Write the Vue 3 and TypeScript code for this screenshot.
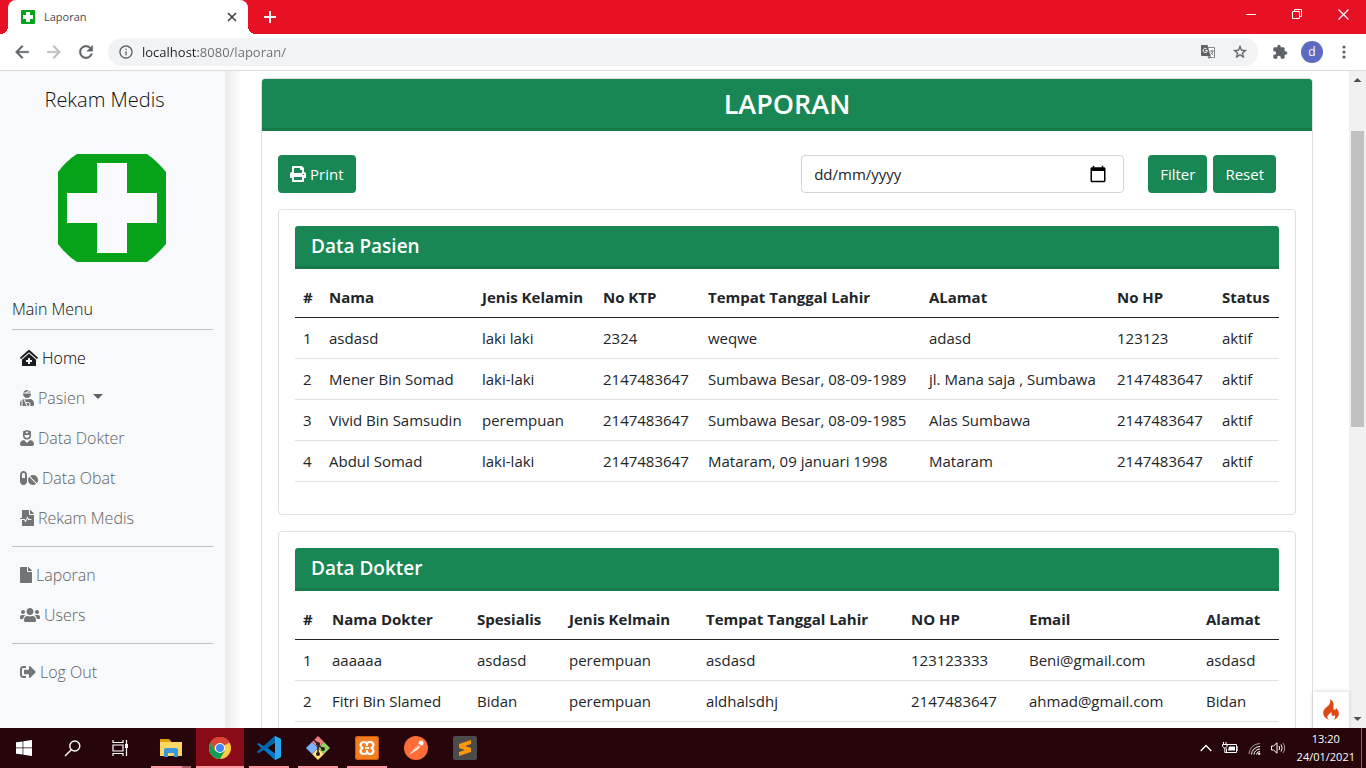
<script setup lang="ts">
import { ref } from 'vue'

interface MenuItem {
  label: string
  width: number
  path: string
  active?: boolean
  dropdown?: boolean
}

interface DataSection {
  title: string
  heads: string[]
  cols: number[]
  rows: string[][]
}

const url = ref('localhost:8080/laporan/')
const date = ref('')

const menuGroups: MenuItem[][] = [
  [
    {
      label: 'Home',
      width: 576,
      active: true,
      path: 'M288 115L69.47 307.71c-1.62 1.46-3.69 2.14-5.47 3.35V496a16 16 0 0 0 16 16h416a16 16 0 0 0 16-16V311.1c-1.7-1.16-3.72-1.82-5.26-3.2zm96 261a8 8 0 0 1-8 8h-56v56a8 8 0 0 1-8 8h-48a8 8 0 0 1-8-8v-56h-56a8 8 0 0 1-8-8v-48a8 8 0 0 1 8-8h56v-56a8 8 0 0 1 8-8h48a8 8 0 0 1 8 8v56h56a8 8 0 0 1 8 8zm186.69-139.72l-255.94-226a39.85 39.85 0 0 0-53.45 0l-256 226a16 16 0 0 0-1.21 22.6L25.5 282.7a16 16 0 0 0 22.6 1.21L277.42 81.63a16 16 0 0 1 21.17 0L527.91 283.9a16 16 0 0 0 22.6-1.21l21.4-23.82a16 16 0 0 0-1.22-22.59z',
    },
    {
      label: 'Pasien',
      width: 448,
      dropdown: true,
      path: 'M277.37 11.98C261.08 4.47 243.11 0 224 0c-53.69 0-99.5 33.13-118.51 80h81.19l90.69-68.02zM342.51 80c-7.9-19.47-20.67-36.2-36.49-49.52L239.99 80h102.52zM224 256c70.69 0 128-57.31 128-128 0-5.48-.95-10.7-1.61-16H97.61c-.67 5.3-1.61 10.52-1.61 16 0 70.69 57.31 128 128 128zM80 299.7V512h128.26l-98.45-221.52A132.835 132.835 0 0 0 80 299.7zM0 464c0 26.51 21.49 48 48 48V320.24C18.88 344.89 0 381.26 0 422.4V464zm256-48h-55.38l42.67 96H256c26.47 0 48-21.53 48-48s-21.53-48-48-48zm57.6-128h-16.71c-22.24 10.18-46.88 16-72.89 16s-50.65-5.82-72.89-16h-7.37l42.67 96H256c44.11 0 80 35.89 80 80 0 18.08-6.26 34.59-16.41 48H400c26.51 0 48-21.49 48-48v-41.6c0-74.23-60.17-134.4-134.4-134.4z',
    },
    {
      label: 'Data Dokter',
      width: 448,
      path: 'M319.41,320,224,415.39,128.59,320C57.1,323.1,0,381.6,0,453.79A58.21,58.21,0,0,0,58.21,512H389.79A58.21,58.21,0,0,0,448,453.79C448,381.6,390.9,323.1,319.41,320ZM224,304A128,128,0,0,0,352,176V65.82a32,32,0,0,0-20.76-30L246.47,4.07a64,64,0,0,0-44.94,0L116.76,35.86A32,32,0,0,0,96,65.82V176A128,128,0,0,0,224,304ZM184,71.67a5,5,0,0,1,5-5h21.67V45a5,5,0,0,1,5-5h16.66a5,5,0,0,1,5,5V66.67H259a5,5,0,0,1,5,5V88.33a5,5,0,0,1-5,5H237.33V115a5,5,0,0,1-5,5H215.67a5,5,0,0,1-5-5V93.33H189a5,5,0,0,1-5-5ZM144,160H304v16a80,80,0,0,1-160,0Z',
    },
    {
      label: 'Data Obat',
      width: 576,
      path: 'M112 32C50.1 32 0 82.1 0 144v224c0 61.9 50.1 112 112 112s112-50.1 112-112V144c0-61.9-50.1-112-112-112zm48 224H64V144c0-26.5 21.5-48 48-48s48 21.5 48 48v112zm139.7-29.7c-3.5-3.5-9.4-3.1-12.3.8-45.3 62.5-40.4 150.1 15.9 206.4 56.3 56.3 143.9 61.2 206.4 15.9 4-2.9 4.3-8.8.8-12.3L299.7 226.3zm229.8-19c-56.3-56.3-143.9-61.2-206.4-15.9-4 2.9-4.3 8.8-.8 12.3l210.8 210.8c3.5 3.5 9.4 3.1 12.3-.8 45.3-62.6 40.5-150.1-15.9-206.4z',
    },
    {
      label: 'Rekam Medis',
      width: 448,
      path: 'M288 136V0H88C74.7 0 64 10.7 64 24v232H8c-4.4 0-8 3.6-8 8v16c0 4.4 3.6 8 8 8h140.9c3 0 5.8 1.7 7.2 4.4l19.9 39.8 56.8-113.7c2.9-5.9 11.4-5.9 14.3 0l34.7 69.5H352c8.8 0 16 7.2 16 16s-7.2 16-16 16h-89.9L240 275.8l-56.8 113.7c-2.9 5.9-11.4 5.9-14.3 0L134.1 320H64v168c0 13.3 10.7 24 24 24h336c13.3 0 24-10.7 24-24V160H312c-13.2 0-24-10.8-24-24zm160-14.1v6.1H320V0h6.1c6.4 0 12.5 2.5 17 7l97.9 98c4.5 4.5 7 10.6 7 16.9z',
    },
  ],
  [
    {
      label: 'Laporan',
      width: 384,
      path: 'M224 136V0H24C10.7 0 0 10.7 0 24v464c0 13.3 10.7 24 24 24h336c13.3 0 24-10.7 24-24V160H248c-13.2 0-24-10.8-24-24zm160-14.1v6.1H256V0h6.1c6.4 0 12.5 2.5 17 7l97.9 98c4.5 4.5 7 10.6 7 16.9z',
    },
    {
      label: 'Users',
      width: 640,
      path: 'M96 224c35.3 0 64-28.7 64-64s-28.7-64-64-64-64 28.7-64 64 28.7 64 64 64zm448 0c35.3 0 64-28.7 64-64s-28.7-64-64-64-64 28.7-64 64 28.7 64 64 64zm32 32h-64c-17.6 0-33.5 7.1-45.1 18.6 40.3 22.1 68.9 62 75.1 109.4h66c17.7 0 32-14.3 32-32v-32c0-35.3-28.7-64-64-64zm-256 0c61.9 0 112-50.1 112-112S381.9 32 320 32 208 82.1 208 144s50.1 112 112 112zm76.8 32h-8.3c-20.8 10-43.9 16-68.5 16s-47.6-6-68.5-16h-8.3C179.6 288 128 339.6 128 403.2V432c0 26.5 21.5 48 48 48h288c26.5 0 48-21.5 48-48v-28.8c0-63.6-51.6-115.2-115.2-115.2zm-223.7-13.4C161.5 263.1 145.6 256 128 256H64c-35.3 0-64 28.7-64 64v32c0 17.7 14.3 32 32 32h65.9c6.3-47.4 34.9-87.3 75.2-109.4z',
    },
  ],
  [
    {
      label: 'Log Out',
      width: 512,
      path: 'M497 273L329 441c-15 15-41 4.5-41-17v-96H152c-13.3 0-24-10.7-24-24v-96c0-13.3 10.7-24 24-24h136V88c0-21.4 25.9-32 41-17l168 168c9.3 9.4 9.3 24.6 0 34zM192 436v-40c0-6.6-5.4-12-12-12H96c-17.7 0-32-14.3-32-32V160c0-17.7 14.3-32 32-32h84c6.6 0 12-5.4 12-12V76c0-6.6-5.4-12-12-12H96c-53 0-96 43-96 96v192c0 53 43 96 96 96h84c6.6 0 12-5.4 12-12z',
    },
  ],
]

const sections: DataSection[] = [
  {
    title: 'Data Pasien',
    heads: ['#', 'Nama', 'Jenis Kelamin', 'No KTP', 'Tempat Tanggal Lahir', 'ALamat', 'No HP', 'Status'],
    cols: [26, 153, 121, 105, 221, 188, 105, 65],
    rows: [
      ['1', 'asdasd', 'laki laki', '2324', 'weqwe', 'adasd', '123123', 'aktif'],
      ['2', 'Mener Bin Somad', 'laki-laki', '2147483647', 'Sumbawa Besar, 08-09-1989', 'jl. Mana saja , Sumbawa', '2147483647', 'aktif'],
      ['3', 'Vivid Bin Samsudin', 'perempuan', '2147483647', 'Sumbawa Besar, 08-09-1985', 'Alas Sumbawa', '2147483647', 'aktif'],
      ['4', 'Abdul Somad', 'laki-laki', '2147483647', 'Mataram, 09 januari 1998', 'Mataram', '2147483647', 'aktif'],
    ],
  },
  {
    title: 'Data Dokter',
    heads: ['#', 'Nama Dokter', 'Spesialis', 'Jenis Kelmain', 'Tempat Tanggal Lahir', 'NO HP', 'Email', 'Alamat'],
    cols: [29, 145, 92, 137, 205, 118, 177, 81],
    rows: [
      ['1', 'aaaaaa', 'asdasd', 'perempuan', 'asdasd', '123123333', 'Beni@gmail.com', 'asdasd'],
      ['2', 'Fitri Bin Slamed', 'Bidan', 'perempuan', 'aldhalsdhj', '2147483647', 'ahmad@gmail.com', 'Bidan'],
    ],
  },
]

const share = (cols: number[], i: number): string =>
  `${(cols[i] / cols.reduce((a, b) => a + b, 0)) * 100}%`
</script>

<template>
  <div class="screen">
    <header class="tabstrip">
      <div class="tab">
        <svg class="favicon" viewBox="0 0 16 16"><rect x="1" y="1" width="14" height="14" rx="1" fill="#04a31a" /><path d="M6 3h4v3h3v4h-3v3H6v-3H3V6h3z" fill="#fff" /></svg>
        <span class="tab-title">Laporan</span>
        <button class="bare" aria-label="Close tab">
          <svg width="10" height="10" viewBox="0 0 10 10"><path d="M1 1l8 8M9 1l-8 8" stroke="#3c4043" stroke-width="1.6" /></svg>
        </button>
      </div>
      <button class="bare new-tab" aria-label="New tab">
        <svg width="12" height="12" viewBox="0 0 12 12"><path d="M6 0v12M0 6h12" stroke="#fff" stroke-width="2" /></svg>
      </button>
      <div class="window-buttons">
        <button class="bare" aria-label="Minimize"><svg width="10" height="10" viewBox="0 0 10 10"><path d="M0 5.500h10" stroke="#fff" /></svg></button>
        <button class="bare" aria-label="Restore"><svg width="10" height="10" viewBox="0 0 10 10"><path d="M.5 2.500h7v7h-7zM2.500 2.500v-2h7v7h-2" fill="none" stroke="#fff" /></svg></button>
        <button class="bare" aria-label="Close"><svg width="11" height="11" viewBox="0 0 11 11"><path d="M.5.5l10 10M10.500.5l-10 10" stroke="#fff" stroke-width="1.200" /></svg></button>
      </div>
    </header>

    <div class="toolbar">
      <button class="bare tool" aria-label="Back"><svg width="20" height="20" viewBox="0 0 24 24" fill="#5f6368"><path stroke="#5f6368" stroke-width=".5" d="M20 11H7.830l5.590-5.590L12 4l-8 8 8 8 1.410-1.410L7.830 13H20v-2z" /></svg></button>
      <button class="bare tool" aria-label="Forward"><svg width="20" height="20" viewBox="0 0 24 24" fill="#bbbdbf"><path stroke="#bbbdbf" stroke-width=".5" d="M4 13h12.170l-5.590 5.590L12 20l8-8-8-8-1.410 1.410L16.170 11H4z" /></svg></button>
      <button class="bare tool" aria-label="Reload"><svg width="20" height="20" viewBox="0 0 24 24" fill="#5f6368"><path stroke="#5f6368" stroke-width=".5" d="M17.65 6.350C16.200 4.900 14.210 4 12 4c-4.420 0-7.990 3.580-7.990 8s3.570 8 7.990 8c3.730 0 6.840-2.550 7.730-6h-2.080c-.82 2.330-3.040 4-5.650 4-3.310 0-6-2.690-6-6s2.690-6 6-6c1.660 0 3.140.69 4.220 1.780L13 11h7V4l-2.350 2.350z" /></svg></button>
      <div class="omnibox">
        <svg width="16" height="16" viewBox="0 0 24 24" fill="#5f6368"><path d="M11 17h2v-6h-2v6zm1-15C6.480 2 2 6.480 2 12s4.480 10 10 10 10-4.480 10-10S17.520 2 12 2zm0 18c-4.410 0-8-3.590-8-8s3.590-8 8-8 8 3.590 8 8-3.590 8-8 8zM11 9h2V7h-2v2z" /></svg>
        <input v-model="url" class="url" type="text" aria-label="Address" spellcheck="false" />
        <button class="bare" aria-label="Translate">
          <svg width="16" height="16" viewBox="0 0 16 16">
            <path d="M7 3.500h7.500v10H9" fill="#fff" stroke="#80868b" />
            <path d="M2 1h5.500l3 11H2a1 1 0 0 1-1-1V2a1 1 0 0 1 1-1z" fill="#5f6368" />
            <path d="M7.500 6.500H5.300M7.300 6.600A2.100 2.100 0 1 1 6.500 4.800" fill="none" stroke="#fff" />
            <path d="M9.800 7h4M11.700 6v1M13 7c-.3 1.700-1.300 3-2.700 4M10.800 8.300c.5 1 1.300 2 2.500 2.700M8 12h2.500L9 14.500z" fill="none" stroke="#5f6368" stroke-width=".8" />
          </svg>
        </button>
        <button class="bare" aria-label="Bookmark"><svg width="16" height="16" viewBox="0 0 24 24" fill="#5f6368"><path stroke="#5f6368" stroke-width=".5" d="M22 9.240l-7.190-.62L12 2 9.190 8.630 2 9.240l5.460 4.730L5.820 21 12 17.270 18.180 21l-1.630-7.030L22 9.240zM12 15.400l-3.760 2.270 1-4.280-3.320-2.880 4.380-.38L12 6.100l1.710 4.040 4.380.38-3.320 2.880 1 4.280L12 15.400z" /></svg></button>
      </div>
      <div class="toolbar-end">
        <button class="bare" aria-label="Extensions"><svg width="16" height="16" viewBox="0 0 24 24" fill="#5f6368"><path d="M20.500 11H19V7c0-1.100-.9-2-2-2h-4V3.500C13 2.120 11.880 1 10.500 1S8 2.120 8 3.500V5H4c-1.100 0-1.990.9-1.990 2v3.800H3.500c1.490 0 2.700 1.210 2.700 2.700s-1.210 2.700-2.700 2.700H2V20c0 1.100.9 2 2 2h3.800v-1.500c0-1.490 1.210-2.700 2.700-2.700 1.490 0 2.700 1.210 2.700 2.700V22H17c1.100 0 2-.9 2-2v-4h1.500c1.380 0 2.500-1.120 2.500-2.500S21.880 11 20.500 11z" /></svg></button>
        <button class="bare avatar">d</button>
        <button class="bare" aria-label="Menu"><svg width="4" height="14" viewBox="0 0 4 14" fill="#5f6368"><circle cx="2" cy="2" r="1.600" /><circle cx="2" cy="7" r="1.600" /><circle cx="2" cy="12" r="1.600" /></svg></button>
      </div>
    </div>

    <div class="viewport">
      <aside class="sidebar">
        <a class="brand" href="#">Rekam Medis</a>
        <svg class="logo" viewBox="0 0 130 130">
          <circle cx="65" cy="65" r="65" fill="#f9f9ff" />
          <path d="M30 11h70q10 7 19 18v72q-9 11-19 18H30q-11-7-19-18V29q8-11 19-18z" fill="#04a31a" />
          <path d="M50 20h30v30h30v30H80v30H50V80H20V50h30z" fill="#f9f9ff" />
        </svg>
        <p class="menu-title">Main Menu</p>
        <nav>
          <template v-for="(group, g) in menuGroups" :key="g">
            <hr />
            <ul>
              <li v-for="item in group" :key="item.label">
                <a href="#" :class="['nav-link', { active: item.active }]">
                  <svg class="nav-icon" :viewBox="`0 0 ${item.width} 512`" :style="{ width: `${item.width / 32}px` }"><path :d="item.path" /></svg>
                  <span>{{ item.label }}</span>
                  <i v-if="item.dropdown" class="caret"></i>
                </a>
              </li>
            </ul>
          </template>
        </nav>
      </aside>

      <main class="content">
        <section class="report">
          <h1>LAPORAN</h1>
          <div class="report-body">
            <form class="filters" @submit.prevent>
              <button type="button" class="btn">
                <svg width="16" height="16" viewBox="0 0 512 512" fill="#fff"><path d="M448 192V77.250c0-8.490-3.370-16.620-9.370-22.630L393.370 9.370c-6-6-14.140-9.370-22.630-9.370H96C78.330 0 64 14.330 64 32v160c-35.350 0-64 28.650-64 64v112c0 8.840 7.160 16 16 16h48v96c0 17.670 14.330 32 32 32h320c17.670 0 32-14.330 32-32v-96h48c8.840 0 16-7.160 16-16V256c0-35.350-28.650-64-64-64zm-64 256H128v-96h256v96zm0-224H128V64h192v48c0 8.840 7.160 16 16 16h48v96zm48 72c-13.250 0-24-10.750-24-24 0-13.260 10.750-24 24-24s24 10.740 24 24c0 13.250-10.750 24-24 24z" /></svg>
                Print
              </button>
              <div class="date">
                <input v-model="date" type="text" placeholder="dd/mm/yyyy" aria-label="Tanggal" />
                <button type="button" class="bare" aria-label="Pilih tanggal"><svg width="18" height="18" viewBox="0 0 24 24"><path d="M20 3h-1V1h-2v2H7V1H5v2H4c-1.100 0-2 .9-2 2v16c0 1.100.9 2 2 2h16c1.100 0 2-.9 2-2V5c0-1.100-.9-2-2-2zm0 18H4V8h16v13z" /></svg></button>
              </div>
              <div class="actions">
                <button type="submit" class="btn">Filter</button>
                <button type="reset" class="btn">Reset</button>
              </div>
            </form>

            <section v-for="s in sections" :key="s.title" class="panel">
              <h2>{{ s.title }}</h2>
              <table>
                <colgroup>
                  <col v-for="(_, i) in s.cols" :key="i" :style="{ width: share(s.cols, i) }" />
                </colgroup>
                <thead>
                  <tr><th v-for="h in s.heads" :key="h" scope="col">{{ h }}</th></tr>
                </thead>
                <tbody>
                  <tr v-for="row in s.rows" :key="row[0]"><td v-for="(cell, i) in row" :key="i">{{ cell }}</td></tr>
                </tbody>
              </table>
            </section>
          </div>
        </section>
      </main>

      <div class="scrollbar">
        <svg viewBox="0 0 17 17"><path d="M4.500 11L8.500 7l4 4z" fill="#505050" /></svg>
        <div class="track"><div class="thumb"></div></div>
        <svg viewBox="0 0 17 17"><path d="M4.500 6l4 4 4-4z" fill="#505050" /></svg>
      </div>

      <button class="bare debug" aria-label="Debug bar">
        <svg width="16" height="22" viewBox="0 0 16 22"><path d="M6.200 21C2.500 19.500.2 17.300.2 13.800c0-4 4.200-5.500 6.300-8.700C7.500 3.500 7.500 1.800 7 .3c3 1.500 4 4.200 3.500 6.700-.3 2-.2 3.300.8 3.800 1.300.5 1.800-.8 1.400-2.100 2 1.600 3.200 3.500 3.200 5.800 0 3.300-2.300 5.300-5.400 6.500 1.800-1.500 2.200-3.600.9-5.100-.5 1-1.300 1.300-2 .8-1.400-.8-.6-2.500-1-4-.9 1.800-3.900 2.900-4 5.300-.1 1.200.6 2.200 1.800 3z" fill="#dd4814" /></svg>
      </button>
    </div>

    <footer class="taskbar">
      <button class="bare task" aria-label="Start"><svg width="16" height="16" viewBox="0 0 16 16" fill="#fff"><path d="M0 2.300L6.600 1.400v6.200H0zM7.300 1.300L16 0v7.600H7.300zM0 8.300h6.600v6.300L0 13.700zM7.300 8.300H16V16l-8.700-1.300z" /></svg></button>
      <button class="bare task" aria-label="Search"><svg width="17" height="17" viewBox="0 0 17 17" fill="none" stroke="#fff" stroke-width="1.400"><circle cx="10.800" cy="6" r="5" /><path d="M7.300 9.700L1 16" /></svg></button>
      <button class="bare task" aria-label="Task View"><svg width="17" height="16" viewBox="0 0 17 16" fill="none" stroke="#fff" stroke-width="1.200"><path d="M1 0v2.500h10V0M1 16v-2.500h10V16M1 5h10v6H1zM14.500 0v16" /><path d="M13 4h3v4h-3z" fill="#fff" stroke="none" /></svg></button>
      <div class="apps">
        <button class="bare task open grouped" aria-label="File Explorer"><svg width="22" height="20" viewBox="0 0 22 20"><path d="M0 1h9l2 2v5H0z" fill="#e0a010" /><path d="M0 4h22v14H0z" fill="#ffd765" /><path d="M4 19v-7q0-2 2-2h10q2 0 2 2v7h-4v-4H8v4z" fill="#3a96dd" /></svg></button>
        <button class="bare task open current" aria-label="Chrome"><svg width="22" height="22" viewBox="0 0 22 22"><circle cx="11" cy="11" r="11" fill="#ffcd40" /><path d="M11 11L1.500 5.500A11 11 0 0 1 20.500 5.500z" fill="#db4437" /><path d="M11 0a11 11 0 0 1 9.500 5.500H11a5.500 5.500 0 0 0-4.800 8.200L1.500 5.500A11 11 0 0 1 11 0z" fill="#db4437" /><path d="M1.500 5.500A11 11 0 0 0 11 22l4.800-8.200L11 15.500 6.200 13.700z" fill="#0f9d58" /><circle cx="11" cy="11" r="5" fill="#fff" /><circle cx="11" cy="11" r="4" fill="#4285f4" /></svg></button>
        <button class="bare task open" aria-label="Visual Studio Code"><svg width="24" height="24" viewBox="0 0 24 24"><path d="M18 0l6 3v18l-6 3L6.500 13.500 2 17 0 16l4.200-4L0 8l2-1 4.500 3.500zM18 6.500L10.500 12l7.500 5.500z" fill="#0078c8" fill-rule="evenodd" /><path d="M18 0l6 3v18l-6 3z" fill="#29a8f2" /><path d="M18 0v6.500L2 17 0 16z" fill="#0065a9" /></svg></button>
        <button class="bare task open" aria-label="Git Bash"><svg width="24" height="24" viewBox="0 0 24 24"><path d="M12 0l6 6-6 6-6-6z" fill="#f37c7c" /><path d="M18 6l6 6-6 6-6-6z" fill="#8cd268" /><path d="M12 12l6 6-6 6-6-6z" fill="#ffe27a" /><path d="M6 6l6 6-6 6-6-6z" fill="#79b2ff" /><path d="M8 4l4 4v10M12 9l5 4" fill="none" stroke="#2b1b1b" stroke-width="1.500" /><g fill="#2b1b1b"><circle cx="12" cy="8" r="2" /><circle cx="12" cy="18" r="2" /><circle cx="17" cy="13" r="2" /></g></svg></button>
        <button class="bare task open" aria-label="XAMPP"><svg width="24" height="24" viewBox="0 0 24 24"><rect width="24" height="24" rx="3" fill="#f57e20" /><rect x=".5" y=".5" width="23" height="23" rx="3" fill="none" stroke="#c9580c" /><path d="M12 9Q12 6 9 6T5.500 9Q5.500 10.500 7.500 12 5.500 13.500 5.500 15 5.500 18 9 18T12 15Q12 18 15 18T18.500 15Q18.500 13.500 16.500 12 18.500 10.500 18.500 9 18.500 6 15 6T12 9zM10 12h4" fill="none" stroke="#fff" stroke-width="2.200" stroke-linejoin="round" /></svg></button>
        <button class="bare task" aria-label="Postman"><svg width="24" height="24" viewBox="0 0 24 24"><circle cx="12" cy="12" r="12" fill="#ff6c37" /><path d="M5 19l6-7 3-3 2 2-3 3z" fill="#fff" opacity=".85" /><circle cx="17" cy="7" r="2.500" fill="#fff" /><path d="M11 13l5-5" stroke="#ff6c37" stroke-width=".8" /></svg></button>
        <button class="bare task" aria-label="Sublime Text"><svg width="24" height="24" viewBox="0 0 24 24"><rect width="24" height="24" rx="2" fill="#4b4b4b" /><path d="M6 8l12-4v4l-6 2 6 2v4L6 20v-4l6-2-6-2z" fill="#ff9800" /></svg></button>
      </div>
      <div class="tray">
        <svg width="12" height="8" viewBox="0 0 12 8"><path d="M.7 7L6 1.500 11.300 7" fill="none" stroke="#fff" stroke-width="1.300" /></svg>
        <svg width="16" height="12" viewBox="0 0 16 12"><path d="M5 2.500h9.500v8H4.500v-4M14.500 5H16v3h-1.500" fill="none" stroke="#fff" /><path d="M7 4.500h6v4H6z" fill="#fff" /><path d="M1.500 0v2M4 0v2M.5 2.500h4.500v2L3.500 6h-1L.5 4.500zM2.800 6v4.500H5" fill="none" stroke="#fff" /></svg>
        <svg width="13" height="13" viewBox="0 0 13 13" fill="none" stroke="#fff"><path d="M1 12A11 11 0 0 1 12 1.500" opacity=".6" /><path d="M3.500 12.500a8.500 8.500 0 0 1 8.500-8M6 12.500a6 6 0 0 1 6-5.500M8.500 12.500A3.500 3.500 0 0 1 12 9.500" /><circle cx="11.200" cy="11.800" r=".8" fill="#fff" /></svg>
        <svg width="16" height="12" viewBox="0 0 16 12" fill="none" stroke="#fff"><path d="M.5 4h2L6 .8v10.400L2.500 8h-2zM8 4q1.300 2 0 4M10 2.500q2.400 3.500 0 7" /><path d="M12 1q3.500 5 0 10" opacity=".6" /></svg>
        <div class="clock"><span>13:20</span><span>24/01/2021</span></div>
      </div>
    </footer>
  </div>
</template>

<style>
body {
  margin: 0;
  overflow: hidden;
}
</style>

<style scoped>
.screen {
  display: flex;
  flex-direction: column;
  height: 100vh;
  font-family: "Open Sans", "Noto Sans", sans-serif;
  font-size: 15px;
  line-height: 24px;
  color: #212529;
  background: #fff;
}

.screen *,
.screen *::before,
.screen *::after {
  box-sizing: border-box;
}

svg {
  flex: none;
  display: block;
}

.bare {
  display: flex;
  align-items: center;
  justify-content: center;
  padding: 0;
  border: 0;
  background: none;
  font: inherit;
}

.tabstrip {
  flex: none;
  display: flex;
  height: 34px;
  padding-left: 8px;
  background: #e81123;
}

.tab {
  position: relative;
  display: flex;
  align-items: center;
  width: 240px;
  padding: 0 11px 0 12px;
  border-radius: 8px 8px 0 0;
  background: #fff;
  font-size: 11px;
  color: #45494d;
}

.tab::before,
.tab::after {
  content: "";
  position: absolute;
  bottom: 0;
  width: 8px;
  height: 8px;
}

.tab::before {
  left: -8px;
  background: radial-gradient(circle at 0 0, #e81123 8px, #fff 8px);
}

.tab::after {
  right: -8px;
  background: radial-gradient(circle at 100% 0, #e81123 8px, #fff 8px);
}

.favicon {
  width: 16px;
  height: 16px;
}

.tab-title {
  flex: 1;
  margin-left: 8px;
}

.new-tab {
  width: 44px;
}

.window-buttons {
  display: flex;
  height: 28px;
  margin-left: auto;
}

.window-buttons .bare {
  width: 46px;
}

.toolbar {
  flex: none;
  display: flex;
  align-items: center;
  height: 37px;
  padding: 0 20px 0 6px;
  border-bottom: 1px solid #dadce0;
  background: #fff;
}

.tool {
  width: 32px;
  height: 28px;
}

.omnibox {
  flex: 1;
  display: flex;
  align-items: center;
  gap: 16px;
  height: 28px;
  margin-left: 6px;
  padding: 0 10px;
  border-radius: 14px;
  background: #f1f3f4;
}

.url {
  flex: 1;
  min-width: 0;
  height: 28px;
  margin-left: -8px;
  padding: 0;
  border: 0;
  outline: 0;
  font: inherit;
  font-size: 13px;
  color: #5f6368;
  background: linear-gradient(90deg, #202124 56px, #6a6e73 56px);
  background-clip: text;
  -webkit-text-fill-color: transparent;
}

.toolbar-end {
  display: flex;
  align-items: center;
  gap: 13px;
  margin-left: 14px;
}

.toolbar-end .bare:last-child {
  margin-left: 6px;
}

.avatar {
  width: 22px;
  height: 22px;
  border-radius: 50%;
  background: #5c6bc0;
  font-size: 12px;
  color: #fff;
}

.viewport {
  position: relative;
  flex: 1;
  display: flex;
  min-height: 0;
  overflow: hidden;
}

.sidebar {
  flex: none;
  width: 225px;
  padding: 14px 12px;
  background: #f8f9fa;
  font-size: 16px;
  font-weight: 300;
  color: #0c0d0e;
}

a {
  color: inherit;
  text-decoration: none;
}

.brand {
  display: block;
  margin-right: 16px;
  font-size: 20px;
  line-height: 30px;
  text-align: center;
}

.logo {
  width: 130px;
  height: 130px;
  margin: 28px auto 24px 35px;
}

.menu-title {
  margin: 0;
}

hr {
  height: 1px;
  margin: 8px 0;
  border: 0;
  background: #c1c2c4;
}

ul {
  margin: 0;
  padding: 0;
  list-style: none;
}

.nav-link {
  display: flex;
  align-items: center;
  gap: 4px;
  padding: 8px;
  color: #5f6163;
}

.nav-icon {
  height: 16px;
  fill: #727476;
}

.nav-link.active {
  color: #000;
}

.nav-link.active .nav-icon {
  fill: #1b1c1d;
}

.caret {
  margin: 0 0 4px 4px;
  border: 5px solid transparent;
  border-top-color: currentColor;
  border-bottom: 0;
}

.content {
  flex: 1;
  min-width: 0;
  padding: 7px 36px 0;
  background: linear-gradient(90deg, #ebebeb, #fff 16px);
}

.report,
.panel {
  border: 1px solid #dfdfdf;
  border-radius: 4px;
  background: #fff;
}

h1,
h2 {
  margin: 0;
  border-bottom: 3px solid #177a4b;
  border-radius: 3px 3px 0 0;
  background: #198754;
  color: #fff;
  font-weight: 600;
}

h1 {
  padding: 8px 16px 7px;
  font-size: 27px;
  line-height: 34px;
  text-align: center;
}

.report-body {
  padding: 24px 16px;
}

.filters {
  display: flex;
  margin-bottom: 16px;
}

.btn {
  display: flex;
  align-items: center;
  gap: 4px;
  padding: 7px 12px;
  border: 0;
  border-radius: 4px;
  background: #198754;
  font: inherit;
  color: #fff;
}

.date {
  display: flex;
  width: 323px;
  height: 38px;
  margin-left: auto;
  padding: 0 16px 0 12px;
  border: 1px solid #ced4da;
  border-radius: 4px;
}

.date input {
  flex: 1;
  min-width: 0;
  padding: 0;
  border: 0;
  outline: 0;
  background: none;
  font: inherit;
  color: #212529;
}

.date input::placeholder {
  color: #212529;
  opacity: 1;
}

.actions {
  display: flex;
  gap: 6px;
  margin: 0 20px 0 24px;
}

.panel {
  margin-bottom: 16px;
  padding: 16px 16px 32px;
}

h2 {
  padding: 8px 16px;
  font-size: 19px;
  line-height: 24px;
}

h2 + table {
  margin-top: 8px;
}

table {
  width: 100%;
  table-layout: fixed;
  border-collapse: separate;
  border-spacing: 0;
}

th,
td {
  padding: 8px;
  border-bottom: 1px solid #dee2e6;
  text-align: left;
  white-space: nowrap;
}

th {
  border-bottom-color: #212529;
  font-weight: 700;
}

.scrollbar {
  flex: none;
  display: flex;
  flex-direction: column;
  width: 17px;
  background: #f1f1f1;
}

.track {
  flex: 1;
  padding: 43px 2px 0;
}

.thumb {
  height: 51%;
  background: #c1c1c1;
}

.debug {
  position: absolute;
  right: 17px;
  bottom: 0;
  width: 36px;
  height: 36px;
  background: #fff;
  box-shadow: 0 0 4px #c8c8c8;
}

.taskbar {
  flex: none;
  display: flex;
  height: 40px;
  background: #26060b;
  color: #fff;
}

.task {
  width: 48px;
  height: 40px;
}

.apps {
  display: flex;
  gap: 1px;
  margin-left: 3px;
}

.open {
  background: linear-gradient(#ff9aa5, #ff9aa5) center bottom / 40px 2px no-repeat;
}

.grouped {
  background: linear-gradient(90deg, #ff9aa5 31px, #a85f68 31px) center bottom / 40px 2px no-repeat;
}

.current {
  background: linear-gradient(#ff9aa5, #ff9aa5) center bottom / 100% 2px no-repeat #880b17;
}

.tray {
  display: flex;
  align-items: center;
  gap: 10px;
  margin-left: auto;
  margin-right: 4px;
  border-right: 1px solid #7d6a6d;
}

.clock {
  display: flex;
  flex-direction: column;
  padding-right: 6px;
  font-size: 11px;
  line-height: 18px;
  text-align: center;
}
</style>
